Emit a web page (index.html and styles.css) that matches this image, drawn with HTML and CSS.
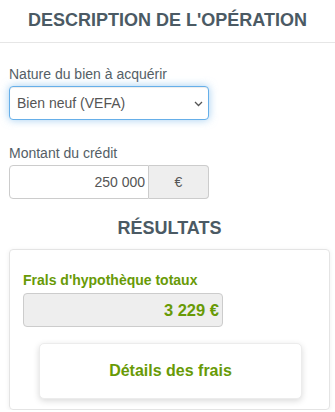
FILE: index.html
```html
<!DOCTYPE html>
<html lang="fr">
<head>
<meta charset="utf-8">
<title>Frais d'hypothèque</title>
<link rel="stylesheet" href="styles.css">
</head>
<body>
<header class="header">DESCRIPTION DE L'OPÉRATION</header>
<main class="content">
  <div class="field">
    <label class="label" for="nature">Nature du bien à acquérir</label>
    <div class="select-wrap">
      <select id="nature" class="select">
        <option>Bien neuf (VEFA)</option>
      </select>
      <svg class="chevron" width="9" height="6" viewBox="0 0 9 6"><path d="M1 1l3.5 3.5L8 1" fill="none" stroke="#555" stroke-width="1.3"/></svg>
    </div>
  </div>
  <div class="field field-second">
    <label class="label" for="montant">Montant du crédit</label>
    <div class="input-group">
      <input id="montant" class="input" type="text" value="250 000">
      <span class="addon">€</span>
    </div>
  </div>
  <h2 class="section-title">RÉSULTATS</h2>
  <section class="card">
    <div class="result-label">Frals d'hypothèque totaux</div>
    <div class="result-value">3 229 €</div>
    <button class="details-btn" type="button">Détails des frais</button>
  </section>
</main>
</body>
</html>
```
FILE: styles.css
```css
* { box-sizing: border-box; }
body {
  margin: 0;
  font-family: "Liberation Sans", Arial, sans-serif;
  background: #fff;
  color: #555;
}
.header {
  height: 43px;
  line-height: 40px;
  text-align: center;
  font-size: 18px;
  font-weight: bold;
  color: #4b5a64;
  border-bottom: 1px solid #e6e6e6;
}
.content {
  padding: 21px 5px 0 9px;
}
.field-second { margin-top: 23px; }
.label {
  display: block;
  font-size: 14px;
  line-height: 20px;
  color: #545e66;
  margin-bottom: 2px;
}
.select-wrap {
  position: relative;
  width: 200px;
}
.select {
  -webkit-appearance: none;
  appearance: none;
  display: block;
  width: 200px;
  height: 34px;
  padding: 0 24px 0 7px;
  font-family: inherit;
  font-size: 14px;
  color: #555;
  background: #fff;
  border: 1px solid #66afe9;
  border-radius: 4px;
  outline: none;
  box-shadow: inset 0 1px 1px rgba(0,0,0,.075), 0 0 8px rgba(102,175,233,.6);
}
.chevron {
  position: absolute;
  right: 6px;
  top: 15px;
  pointer-events: none;
}
.input-group {
  display: flex;
  width: 200px;
  height: 34px;
}
.input {
  width: 140px;
  height: 34px;
  padding: 0 3px 0 8px;
  text-align: right;
  font-family: inherit;
  font-size: 14px;
  color: #555;
  border: 1px solid #ccc;
  border-radius: 4px 0 0 4px;
  outline: none;
}
.addon {
  flex: 1;
  display: flex;
  align-items: center;
  justify-content: center;
  font-size: 14px;
  color: #555;
  background: #eee;
  border: 1px solid #ccc;
  border-left: none;
  border-radius: 0 4px 4px 0;
}
.section-title {
  margin: 19px 0 0;
  font-size: 18px;
  line-height: 20px;
  text-align: center;
  font-weight: bold;
  color: #4b5a64;
}
.card {
  margin-top: 11px;
  border: 1px solid #e4e4e4;
  border-radius: 4px;
  box-shadow: 0 1px 5px rgba(0,0,0,.07);
  padding: 20px 13px 10px 13px;
}
.result-label {
  font-size: 14px;
  line-height: 20px;
  font-weight: bold;
  color: #689a06;
}
.result-value {
  margin-top: 3px;
  width: 200px;
  height: 34px;
  line-height: 32px;
  padding-right: 3px;
  text-align: right;
  font-size: 16.5px;
  font-weight: bold;
  color: #689a06;
  background: #eee;
  border: 1px solid #ccc;
  border-radius: 4px;
}
.details-btn {
  display: block;
  margin: 16px 14px 0 16px;
  width: 263px;
  height: 56px;
  font-family: inherit;
  font-size: 16px;
  font-weight: bold;
  color: #689a06;
  background: #fff;
  border: 1px solid #ececec;
  border-radius: 5px;
  box-shadow: 0 2px 6px rgba(0,0,0,.15);
}
```
